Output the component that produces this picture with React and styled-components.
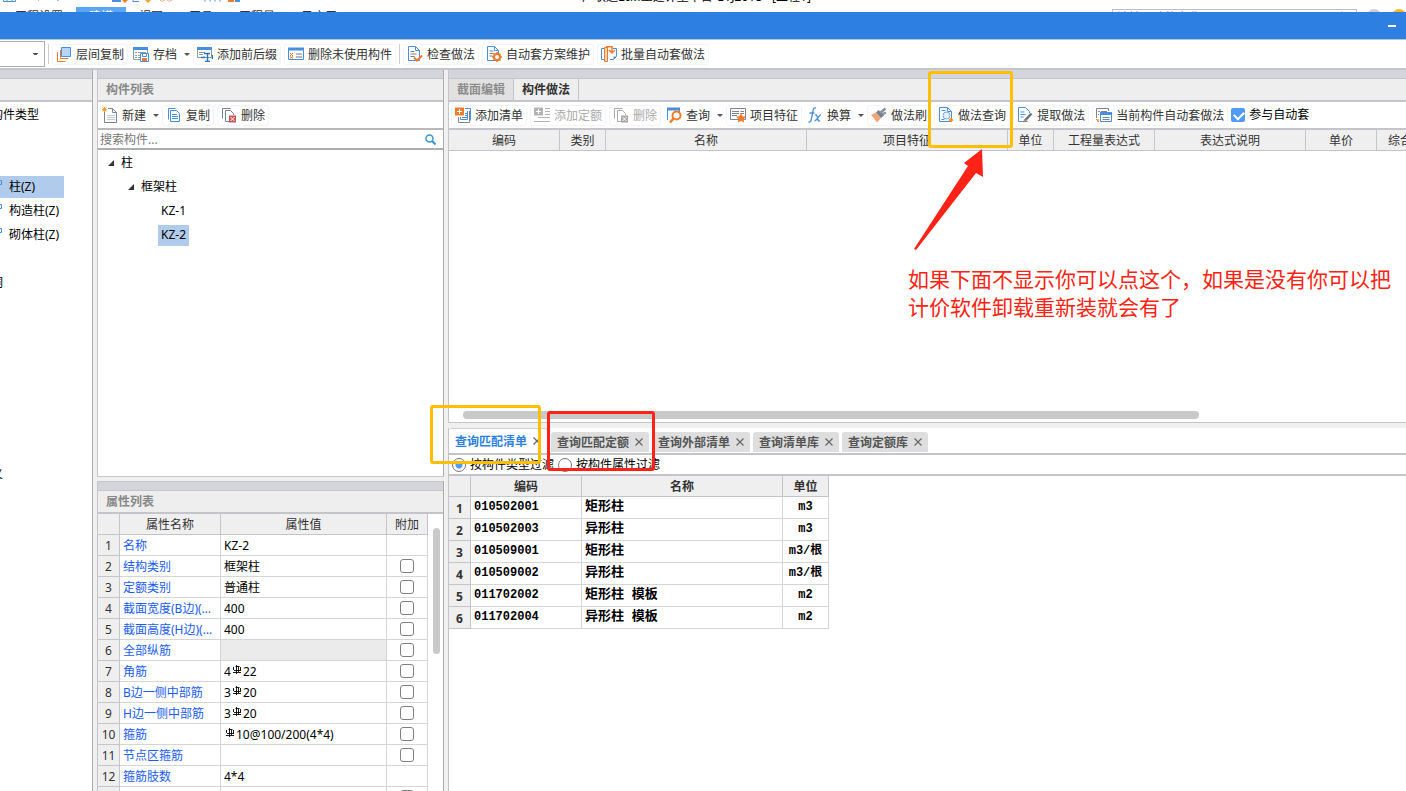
import { useState } from "react";
import styled, { createGlobalStyle, css } from "styled-components";

const line = "#c3c5ca";
const edge = "#adadad";
const accent = "#4a8fdc";
const orange = "#ee7b2b";

const GlobalStyle = createGlobalStyle`
  * {
    box-sizing: border-box;
  }
  body {
    margin: 0;
    overflow: hidden;
    background: #f0f0f0;
    color: #333;
  }
  body, button, input, select, table {
    font-family: "Noto Sans", "Noto Sans CJK SC", sans-serif;
    font-size: 12px;
    line-height: 16px;
  }
  button {
    margin: 0;
    padding: 0;
    border: 0;
    background: none;
    color: inherit;
    white-space: nowrap;
  }
  svg {
    display: block;
    flex-shrink: 0;
  }
`;

const Window = styled.div`
  position: relative;
  display: flex;
  flex-direction: column;
  height: 100vh;
  overflow: hidden;
`;

/* main window, mostly hidden behind the dialog */
const BackWindow = styled.div`
  height: 12px;
  background: #fff;
  overflow: hidden;
`;

const BackTitle = styled.div`
  display: flex;
  align-items: flex-end;
  height: 7px;
  padding-left: 2px;
  overflow: hidden;
  color: #000;
  span {
    margin: 0 0 4px 342px;
    line-height: 12px;
    white-space: nowrap;
  }
`;

const BackTabs = styled.div`
  display: flex;
  align-items: flex-start;
  height: 20px;
  padding-left: 2px;
`;

const BackTab = styled.button`
  padding: 0 13px;
  line-height: 20px;
  color: ${(p) => (p.$active ? "#fff" : "#333")};
  background: ${(p) => (p.$active ? "#5aa7f8" : "none")};
`;

const BackSearch = styled.div`
  width: 245px;
  height: 20px;
  margin: 2px 10px 0 auto;
  padding: 0 10px 0 4px;
  display: flex;
  justify-content: space-between;
  border: 1px solid #c0c0c0;
  color: #999;
  line-height: 16px;
`;

const Avatars = styled.div`
  display: flex;
  gap: 11px;
  padding-top: 2px;
`;

const Avatar = styled.i`
  width: 14px;
  height: 14px;
  border-radius: 50%;
  border: 3px solid ${(p) => p.$color};
`;

const TitleBar = styled.header`
  display: flex;
  justify-content: flex-end;
  align-items: center;
  height: 28px;
  padding-right: 10px;
  background: #2d7fe1;
  border-bottom: 1px solid #b9c4d3;
`;

const Minimize = styled.button`
  width: 8px;
  height: 2px;
  background: #fff;
`;

const Toolbar = styled.div`
  display: flex;
  align-items: center;
  gap: 3px;
  height: 26px;
  padding: 0 2px;
  background: #fff;
  overflow: hidden;
`;

const MainToolbar = styled(Toolbar)`
  height: 30px;
  padding: 0;
  border-bottom: 2px solid ${line};
`;

const FloorSelect = styled.select`
  width: 45px;
  height: 26px;
  border: 1px solid ${edge};
  border-left: 0;
  background: #fff;
  appearance: none;
  background-image: linear-gradient(45deg, transparent 50%, #555 50%),
    linear-gradient(-45deg, transparent 50%, #555 50%);
  background-position: 33px 11px, 36px 11px;
  background-size: 3px 3px;
  background-repeat: no-repeat;
`;

const Divider = styled.span`
  width: 1px;
  height: 20px;
  background: #cfcfcf;
`;

const ToolButton = styled.button`
  display: flex;
  align-items: center;
  gap: 4px;
  height: 21px;
  padding: 0 3px;
  border: 1px solid #f4f4f4;
  border-radius: 3px;
  &:disabled {
    color: #aaa;
  }
  span {
    padding-top: 2px;
  }
  ${(p) =>
    p.$menu &&
    css`
      padding: 0 0 0 1px;
      border-color: transparent;
      border-right: 0;
    `}
`;

const Caret = styled.i`
  width: 6px;
  margin-left: 3px;
  border: 3px solid transparent;
  border-top-color: #555;
  border-bottom: 0;
`;

const Workspace = styled.main`
  flex: 1;
  min-height: 0;
  display: grid;
  grid-template-columns: 93px 347px minmax(0, 1fr);
  grid-template-rows: minmax(0, 1fr);
  gap: 4px;
`;

const Stack = styled.div`
  display: grid;
  grid-template-columns: minmax(0, 1fr);
  grid-template-rows: ${(p) => p.$rows};
  gap: ${(p) => p.$gap};
`;

const Panel = styled.section`
  display: flex;
  flex-direction: column;
  min-height: 0;
  overflow: hidden;
  background: #fff;
  border: 1px solid ${line};
  border-width: ${(p) => p.$borders};
  border-right-color: ${edge};
`;

const PanelGrip = styled.div`
  flex-shrink: 0;
  height: 9px;
  background: #d3d5db;
  border-bottom: 1px solid ${line};
`;

const PanelTitle = styled.h2`
  flex-shrink: 0;
  height: 23px;
  margin: 0;
  padding-left: 8px;
  background: #eee;
  border-bottom: 2px solid ${line};
  color: #888;
  font-size: 12px;
  font-weight: 700;
  line-height: 21px;
`;

const TypeList = styled.ul`
  margin: 0 0 0 -33px;
  padding: 2px 0 0;
  list-style: none;
  color: #000;
`;

const TypeItem = styled.li`
  display: flex;
  align-items: center;
  gap: 6px;
  width: 97px;
  height: 22px;
  margin-bottom: 2px;
  padding-left: ${(p) => (p.$child ? "20px" : "0")};
  background: ${(p) => (p.$selected ? "#b1cbed" : "none")};
  white-space: nowrap;
`;

const SearchRow = styled.label`
  display: flex;
  align-items: center;
  flex-shrink: 0;
  height: 22px;
  padding: 0 7px 0 2px;
  border-top: 2px solid #b8b8bb;
  border-bottom: 2px solid ${edge};
  input {
    flex: 1;
    min-width: 0;
    padding: 2px 0 0;
    border: 0;
    outline: 0;
    background: none;
  }
  input::placeholder {
    color: #777;
  }
`;

const Tree = styled.ul`
  margin: 0;
  padding: 1px 0 0 10px;
  list-style: none;
  color: #000;
`;

const TreeItem = styled.li`
  display: flex;
  align-items: center;
  gap: 4px;
  height: 24px;
  padding-left: ${(p) => p.$level * 20}px;
`;

const TreeLabel = styled.button`
  height: 21px;
  padding: 0 3px;
  background: ${(p) => (p.$selected ? "#b1cbed" : "none")};
`;

const TableArea = styled.div`
  display: flex;
  flex: 1;
  min-height: 0;
  overflow: hidden;
`;

const MethodArea = styled(TableArea)`
  border-top: 2px solid ${line};
`;

const Grid = styled.table`
  flex-shrink: 0;
  align-self: flex-start;
  width: ${(p) => p.$width};
  border-collapse: separate;
  border-spacing: 0;
  table-layout: fixed;
  color: #000;
  th, td {
    height: ${(p) => p.$row};
    padding: 2px 3px 0;
    border-right: 1px solid #d5d5d5;
    border-bottom: 1px solid #d5d5d5;
    text-align: left;
    font-weight: 400;
    white-space: nowrap;
    overflow: hidden;
    text-overflow: ellipsis;
  }
  thead th {
    height: 21px;
  }
  th {
    padding: 2px 0 0;
    background: #efefef;
    border-color: ${line};
    color: #333;
    text-align: center;
  }
`;

const MatchGrid = styled(Grid)`
  th, tbody th {
    font-weight: 700;
  }
  tbody th {
    padding-top: 3px;
  }
  td {
    padding-top: 0;
    padding-bottom: 2px;
    font-family: "Liberation Mono", "Noto Sans CJK SC", monospace;
    font-weight: 700;
  }
  td:nth-child(3) {
    font-size: 13px;
  }
  td:last-child {
    padding-left: 0;
    padding-right: 0;
    text-align: center;
  }
`;

const NameCell = styled.td`
  && {
    color: #1a5cf0;
  }
`;

const ValueCell = styled.td`
  background: ${(p) => (p.$locked ? "#ebebeb" : "none")};
  svg {
    display: inline-block;
    margin: 0 1px;
    vertical-align: 1px;
  }
`;

const CheckCell = styled.td`
  && {
    padding-top: 0;
  }
`;

const Check = styled.input.attrs({ type: "checkbox" })`
  appearance: none;
  display: block;
  width: 14px;
  height: 14px;
  margin: 0 auto;
  border: 1px solid #808080;
  border-radius: 3px;
  background: #fff;
  ${(p) =>
    p.$blue &&
    css`
      margin: 0 4px 0 0;
      border: 0;
      border-radius: 2px;
      background: #4f9bf6;
      &:checked::after {
        content: "";
        display: block;
        width: 8px;
        height: 5px;
        margin: 3px;
        border: solid #fff;
        border-width: 0 0 2px 2px;
        transform: rotate(-45deg);
      }
    `}
`;

const CheckLabel = styled.label`
  display: flex;
  align-items: center;
  color: #000;
  white-space: nowrap;
`;

const VScroll = styled.div`
  flex: 1;
  padding: 14px 3px 0 5px;
  i {
    display: block;
    height: 126px;
    border-radius: 4px;
    background: #c9c9c9;
  }
`;

const HScroll = styled.div`
  padding: 0 0 3px 14px;
  i {
    display: block;
    width: 78%;
    height: 8px;
    border-radius: 4px;
    background: #c9c9c9;
  }
`;

const ViewTabs = styled.div`
  display: flex;
  flex-shrink: 0;
  height: 23px;
  background: #eee;
  border-bottom: 2px solid ${line};
`;

const ViewTab = styled.button`
  width: 65px;
  border-right: 1px solid ${line};
  background: ${(p) => (p.$active ? "#eee" : "#e1e1e1")};
  color: ${(p) => (p.$active ? "#333" : "#8c8c8c")};
  font-weight: 700;
`;

const QueryTabs = styled.div`
  display: flex;
  align-items: flex-end;
  gap: 3px;
  height: 27px;
  background: #fff;
  border-bottom: 2px solid ${line};
`;

const QueryTab = styled.div`
  display: flex;
  align-items: center;
  gap: 6px;
  height: 20px;
  margin-bottom: 1px;
  padding: 0 6px;
  border-radius: 3px 3px 0 0;
  background: #dedede;
  color: #555;
  font-weight: 700;
  ${(p) =>
    p.$active &&
    css`
      height: 25px;
      margin-bottom: 0;
      border: 1px solid #d0d0d0;
      border-width: 1px 1px 0 0;
      background: #fff;
      color: #2d7fe1;
    `}
  button {
    font-weight: inherit;
  }
  button:first-child {
    padding-top: 2px;
  }
`;

const FilterRow = styled.div`
  display: flex;
  align-items: center;
  flex-shrink: 0;
  gap: 4px;
  height: 21px;
  padding-left: 3px;
  border-bottom: 2px solid ${line};
  label {
    display: flex;
    align-items: center;
    gap: 4px;
    color: #000;
  }
  input {
    appearance: none;
    width: 14px;
    height: 14px;
    margin: 0;
    border: 1px solid #777;
    border-radius: 50%;
    background: #fff;
  }
  input:checked {
    background: radial-gradient(circle, #4f9bf6 3px, #fff 4px);
  }
`;

const Fill = styled.div`
  flex: 1;
  min-height: 0;
`;

/* notes drawn over the window */
const Marker = styled.div`
  position: absolute;
  left: ${(p) => p.$x}px;
  top: ${(p) => p.$y}px;
  width: ${(p) => p.$w}px;
  height: ${(p) => p.$h}px;
  border: 3px solid ${(p) => p.$color};
  border-radius: 3px;
  pointer-events: none;
`;

const Arrow = styled.svg`
  position: absolute;
  left: 912px;
  top: 146px;
  pointer-events: none;
`;

const Note = styled.p`
  position: absolute;
  left: 908px;
  top: 264px;
  width: 490px;
  margin: 0;
  color: #fb2414;
  font-family: "Noto Sans CJK SC", sans-serif;
  font-size: 21px;
  line-height: 28px;
`;

const drawings = {
  layers: (
    <>
      <path d="M1.500 6v9.500h8M4.500 4v8.500h8" stroke={orange} />
      <path d="M5.500 1.500h9v9h-9z" fill="#b5d5fb" stroke={accent} />
    </>
  ),
  archive: (
    <>
      <path d="M.5 1.500h14v12H.5z" stroke="#8b98a5" fill="#fff" />
      <path d="M0 1h15v3H0z" fill={accent} />
      <path d="M2 6.500h2m1 0h8M2 9.500h2m1 0h2M2 11.500h2m1 0h2" stroke="#8b98a5" />
      <path d="M7.500 7.500h8v8h-8z" fill="#fff" stroke={accent} />
      <path d="M9.500 8v2.500h4V8" stroke={accent} />
      <path d="M9 12h5v3H9z" fill={orange} />
    </>
  ),
  affix: (
    <>
      <path d="M.5 1.500h14v10H.5z" stroke="#8b98a5" fill="#fff" />
      <path d="M0 1h15v3H0z" fill={accent} />
      <path d="M2 6.500h6M2 8.500h4" stroke="#8b98a5" />
      <path d="M7 7.500h6M10.500 7.500v8M4 11.500h3v-1M8 15.500h5M15.500 9v4" stroke="#2f74c4" strokeWidth="1.500" />
    </>
  ),
  unused: (
    <>
      <path d="M.5 2.500h15v11H.5z" stroke={accent} fill="#fff" />
      <path d="M0 1.500h16v3H0z" fill={accent} />
      <path d="M2 7l3 3M5 7l-3 3M2 10.500l3 2M5 10.500l-3 2" stroke={orange} />
      <path d="M8 8h6M8 11h6" stroke="#667788" />
    </>
  ),
  check: (
    <>
      <path d="M1.500.5h7l4 4v10h-11z" fill="#fff" stroke={accent} />
      <path d="M8.500.5v4h4" stroke={accent} />
      <path d="M3.500 5.500h4M3.500 8h6M3.500 10.500h4" stroke="#6f7f8f" />
      <path d="M7 11.500l3 3 5-5" stroke={orange} strokeWidth="2" />
    </>
  ),
  scheme: (
    <>
      <path d="M1.500.5h7l4 4v10h-11z" fill="#fff" stroke={accent} />
      <path d="M8.500.5v4h4" stroke={accent} />
      <path d="M3.500 5h4M3.500 7.500h4M3.500 10h3" stroke="#6f7f8f" />
      <circle cx="11" cy="11" r="3" fill="#fff" stroke={orange} strokeWidth="2" />
      <path d="M11 6v2M11 14v2M6 11h2M14 11h2M7.500 7.500l1.500 1.500M13 13l1.500 1.500M14.500 7.500L13 9M9 13l-1.500 1.500" stroke={orange} strokeWidth="1.500" />
    </>
  ),
  batch: (
    <>
      <path d="M3 2.500H.5v11H3M12 2.500h3.500v8l-3 3H9" stroke={accent} />
      <path d="M12.500 13.500v-3h3" fill={accent} />
      <path d="M3.500 1.500h3v14h-3z" fill="#fdd5b5" stroke={orange} />
      <path d="M5 .7h6v5M8 4l3 3 3-3" stroke={orange} strokeWidth="1.500" />
    </>
  ),
  create: (
    <>
      <path d="M2.500 5v10.500h12v-10l-4-4H6" fill="#fff" stroke="#7c858e" />
      <path d="M10.500 1.500v4h4" stroke="#7c858e" />
      <path d="M5 8.500h8M5 10.500h8M5 12.500h8" stroke="#c3c8cd" />
      <path d="M.5.5l4 4M4.500.5l-4 4M2.500 0v5M0 2.500h5" stroke="#f5a02c" />
    </>
  ),
  copy: (
    <>
      <path d="M2.500 12.500v-11h7" stroke={accent} />
      <path d="M4.500 3.500h6l3 3v8h-9z" fill="#fff" stroke={accent} />
      <path d="M6 7.500h5M6 9.500h6M6 11.500h6" stroke={accent} />
    </>
  ),
  remove: (
    <>
      <path d="M1.500 11.500v-10h8" stroke="#7c858e" />
      <path d="M8 14.500H4.500v-11h5l3 3V8" stroke="#7c858e" />
      <path d="M8 8.500h7v7H8z" fill="#c95454" />
      <path d="M9.500 10l4 4M13.500 10l-4 4" stroke="#fff" />
    </>
  ),
  removeOff: (
    <>
      <path d="M1.500 11.500v-10h8" stroke="#aaa" />
      <path d="M8 14.500H4.500v-11h5l3 3V8" stroke="#aaa" />
      <path d="M8 8.500h7v7H8z" fill="#a8a8a8" />
      <path d="M9.500 10l4 4M13.500 10l-4 4" stroke="#fff" />
    </>
  ),
  addList: (
    <>
      <path d="M10 1.500h5.500v12M12.500 4v8.500h-7V10" stroke={accent} />
      <path d="M3.500 10v5.500h11V4" stroke="#7c858e" />
      <path d="M10 6.500h2M10 8.500h2M7 10.500h5" stroke={accent} />
      <path d="M0 .5h9v8H0z" fill={orange} />
      <path d="M2 4.500h5M4.500 2v5" stroke="#fff" />
    </>
  ),
  addQuota: (
    <>
      <path d="M0 .5h9v8H0z" fill="#b3b3b3" />
      <path d="M2 4.500h5M4.500 2v5" stroke="#fff" />
      <path d="M11 1.500h5M11 4.500h5M11 7.500h5M4 10.500h12M0 14.500h16" stroke="#b3b3b3" />
    </>
  ),
  query: (
    <>
      <path d="M1.500 13V2h12v3" stroke={accent} />
      <path d="M1 .5h13v3H1z" fill={accent} />
      <circle cx="10.500" cy="8.500" r="4" fill="#fff" stroke={orange} strokeWidth="2" />
      <path d="M7.500 11.500L4 15.500" stroke={orange} strokeWidth="2.500" />
    </>
  ),
  feature: (
    <>
      <path d="M.5 1.500h15v11H.5z" fill="#fff" stroke="#7c858e" />
      <path d="M2 4.500h7M2 6.500h7M2 8.500h5M10.500 4.500H14M10.500 6.500H14" stroke="#7c858e" />
      <path d="M11 6l1.600 3.200 3.400.5-2.500 2.400.6 3.500-3.100-1.700-3.100 1.700.6-3.500L6 9.700l3.400-.5z" fill={orange} />
    </>
  ),
  fx: (
    <path d="M1.500 15c2 .5 2.500-1 3-3.500L6 4c.5-2.500 1-3.500 3-3M2.500 6h5M8 8c2-1 2 1 2.500 3s1 4 2.500 2.500M14 8c-2-.5-4 6-6.500 6" stroke={accent} strokeWidth="1.300" />
  ),
  brush: (
    <>
      <path d="M0 8l5-2.500 5 5.500-4 4.500q-3-5-6-7.500z" fill="#f4a374" />
      <path d="M5 5.500l2.500-2.500 5.500 5.500-3 2.500z" fill="#75818d" />
      <path d="M9 6l5.500-4.500M11 7.500l4-2" stroke="#8793a0" strokeWidth="2.500" />
    </>
  ),
  lookup: (
    <>
      <path d="M1.500.5h8l4 4v10h-12z" fill="#fff" stroke={accent} />
      <path d="M9.500.5v4h4M3.500 3.500h4M3.500 12.500h3" stroke={accent} />
      <circle cx="8.500" cy="8.500" r="3.500" fill="#e3effd" stroke="#7aa6dc" />
      <path d="M10.500 13l2.500-2.500 2.500 2.500-2.500 2.500z" fill="#f09322" />
    </>
  ),
  extract: (
    <>
      <path d="M12.500 6V4.500l-4-4h-7v14h9" fill="#fff" stroke={accent} />
      <path d="M3.500 5h4M3.500 7.500h5M3.500 10h3" stroke={accent} />
      <path d="M8 13.500l6.500-7" stroke="#66727e" strokeWidth="2.500" />
      <path d="M6 15.500l1-3 2 2z" fill={orange} />
    </>
  ),
  current: (
    <>
      <path d="M.5 11V1.500h12V4M2 4.500h2m1 0h6M2 7.500h1" stroke="#7c858e" />
      <path d="M4.500 5.500h11v9h-11z" fill="#fff" stroke={accent} />
      <path d="M4 5h12v3H4z" fill={accent} />
      <path d="M6.500 10.500h7M6.500 12.500h7" stroke="#7c858e" />
      <path d="M0 12l3 3M2 12v3" stroke={orange} />
    </>
  ),
  column: (
    <path d="M8 1.500h6.500v4H8M4 12h8" stroke={accent} />
  ),
};

function Icon({ name }) {
  return (
    <svg width="16" height="16" viewBox="0 0 16 16" fill="none" aria-hidden="true">
      {drawings[name]}
    </svg>
  );
}

function Tool({ icon, label, menu, disabled }) {
  return (
    <ToolButton $menu={menu} disabled={disabled}>
      <Icon name={icon} />
      <span>{label}</span>
      {menu && <Caret />}
    </ToolButton>
  );
}

function Expander() {
  return (
    <svg width="6" height="6" viewBox="0 0 6 6" aria-hidden="true">
      <path d="M6 0v6H0z" fill="#333" />
    </svg>
  );
}

function Rebar() {
  return (
    <svg width="10" height="10" viewBox="0 0 10 10" fill="none" stroke="#000" role="img" aria-label="HRB400">
      <path d="M3.500 1.500h4M1.500 2v3M8.500 2v3M2 5.500h7M1 7.500h8M4.500 0v9M6.500 2v5" strokeWidth="0.900" />
    </svg>
  );
}

function Close() {
  return (
    <svg width="8" height="8" viewBox="0 0 8 8" stroke="#666" strokeWidth="1.200" aria-hidden="true">
      <path d="M.5.5l7 7M7.500.5l-7 7" />
    </svg>
  );
}

const types = [
  "常用构件类型", "轴线", "柱", "柱(Z)", "构造柱(Z)", "砌体柱(Z)", "墙", "门窗洞",
  "梁", "板", "楼梯", "装修", "土方", "基础", "其它", "自定义",
];

const properties = [
  { name: "名称", value: "KZ-2", noCheck: true },
  { name: "结构类别", value: "框架柱" },
  { name: "定额类别", value: "普通柱" },
  { name: "截面宽度(B边)(mm)", value: "400" },
  { name: "截面高度(H边)(mm)", value: "400" },
  { name: "全部纵筋", value: "", locked: true },
  { name: "角筋", value: <>4<Rebar />22</> },
  { name: "B边一侧中部筋", value: <>3<Rebar />20</> },
  { name: "H边一侧中部筋", value: <>3<Rebar />20</> },
  { name: "箍筋", value: <><Rebar />10@100/200(4*4)</> },
  { name: "节点区箍筋", value: "" },
  { name: "箍筋肢数", value: "4*4", noCheck: true },
  { name: "", value: "" },
];

const methodColumns = [
  ["编码", 111], ["类别", 46], ["名称", 201], ["项目特征", 201], ["单位", 46],
  ["工程量表达式", 101], ["表达式说明", 151], ["单价", 71], ["综合单价", 71],
];

const matches = [
  ["010502001", "矩形柱", "m3"],
  ["010502003", "异形柱", "m3"],
  ["010509001", "矩形柱", "m3/根"],
  ["010509002", "异形柱", "m3/根"],
  ["011702002", "矩形柱 模板", "m2"],
  ["011702004", "异形柱 模板", "m2"],
];

const queries = ["查询匹配清单", "查询匹配定额", "查询外部清单", "查询清单库", "查询定额库"];

export default function App() {
  const [query, setQuery] = useState(queries[0]);
  const [component, setComponent] = useState("KZ-2");

  return (
    <Window>
      <GlobalStyle />
      <BackWindow>
        <BackTitle>
          <svg width="238" height="7" viewBox="0 0 238 7" fill="none">
            <path d="M1.500 0v1.500h12V0M5 0v2M10 0v2M131 0v1.500h6" stroke={accent} />
            <path d="M36 0h1M55 0h2" stroke="#777" />
            <path d="M110 0h9v2h-9zM233 0h6v2h-6z" fill={accent} />
            <path d="M120 0h6l-3 3zM226 0h6v2h-6z" fill={orange} />
            <path d="M143 0h6l-3 3z" fill="#f0a22c" />
            <path d="M158 0q2 3 5 0M165 0q2 3 5 0" stroke="#f3a779" />
            <path d="M203 0v1.500M208 0v1.500M213 0v1.500M218 0v1.500" stroke={accent} />
          </svg>
          <span>广联达BIM土建计量平台 GTJ2018 - [工程1]</span>
        </BackTitle>
        <BackTabs>
          {["工程设置", "建模", "视图", "工具", "工程量", "云应用"].map((t) => (
            <BackTab key={t} $active={t === "建模"}>{t}</BackTab>
          ))}
          <BackSearch>
            <span>请输入功能名称</span>
            <svg width="8" height="8" viewBox="0 0 8 8" fill="none" stroke="#999">
              <circle cx="4" cy="5" r="3" />
            </svg>
          </BackSearch>
          <Avatars>
            <Avatar $color="#d0d0d0" />
            <Avatar $color="#f3b91e" />
          </Avatars>
        </BackTabs>
      </BackWindow>
      <TitleBar>
        <Minimize aria-label="最小化" />
      </TitleBar>

      <MainToolbar>
        <FloorSelect aria-label="楼层">
          <option></option>
        </FloorSelect>
        <Divider />
        <Tool icon="layers" label="层间复制" />
        <Tool icon="archive" label="存档" menu />
        <Tool icon="affix" label="添加前后缀" />
        <Tool icon="unused" label="删除未使用构件" />
        <Divider />
        <Tool icon="check" label="检查做法" />
        <Tool icon="scheme" label="自动套方案维护" />
        <Tool icon="batch" label="批量自动套做法" />
      </MainToolbar>

      <Workspace>
        <Panel $borders="0 1px 0 0">
          <PanelGrip />
          <PanelTitle />
          <TypeList>
            {types.map((t) => (
              <TypeItem key={t} $child={t.includes("(Z)")} $selected={t === "柱(Z)"}>
                {t.includes("(Z)") && <Icon name="column" />}
                {t}
              </TypeItem>
            ))}
          </TypeList>
        </Panel>

        <Stack $rows="minmax(0, 407fr) minmax(0, 310fr)" $gap="4px">
          <Panel $borders="0 1px 1px">
            <PanelGrip />
            <PanelTitle>构件列表</PanelTitle>
            <Toolbar>
              <Tool icon="create" label="新建" menu />
              <Tool icon="copy" label="复制" />
              <Tool icon="remove" label="删除" />
            </Toolbar>
            <SearchRow>
              <input aria-label="搜索构件" placeholder="搜索构件..." />
              <svg width="11" height="11" viewBox="0 0 11 11" fill="none" stroke="#3c94cf">
                <circle cx="4.500" cy="4.500" r="3.500" strokeWidth="1.500" />
                <path d="M7 7l3.500 3.500" strokeWidth="2" />
              </svg>
            </SearchRow>
            <Tree>
              <TreeItem $level={0}><Expander /><TreeLabel>柱</TreeLabel></TreeItem>
              <TreeItem $level={1}><Expander /><TreeLabel>框架柱</TreeLabel></TreeItem>
              {["KZ-1", "KZ-2"].map((k) => (
                <TreeItem key={k} $level={2.5}>
                  <TreeLabel $selected={component === k} onClick={() => setComponent(k)}>{k}</TreeLabel>
                </TreeItem>
              ))}
            </Tree>
          </Panel>

          <Panel $borders="1px 1px 0">
            <PanelGrip />
            <PanelTitle>属性列表</PanelTitle>
            <TableArea>
              <Grid $width="330px" $row="21px">
                <colgroup>
                  <col width="22" />
                  <col width="101" />
                  <col width="166" />
                  <col width="41" />
                </colgroup>
                <thead>
                  <tr>
                    <th></th>
                    <th>属性名称</th>
                    <th>属性值</th>
                    <th>附加</th>
                  </tr>
                </thead>
                <tbody>
                  {properties.map((p, i) => (
                    <tr key={i}>
                      <th>{p.name && i + 1}</th>
                      <NameCell>{p.name}</NameCell>
                      <ValueCell $locked={p.locked}>{p.value}</ValueCell>
                      <CheckCell>{!p.noCheck && <Check aria-label={p.name || "附加"} />}</CheckCell>
                    </tr>
                  ))}
                </tbody>
              </Grid>
              <VScroll><i /></VScroll>
            </TableArea>
          </Panel>
        </Stack>

        <Stack $rows="minmax(0, 353fr) minmax(0, 363fr)" $gap="5px">
          <Panel $borders="0 0 1px 1px">
            <PanelGrip />
            <ViewTabs>
              <ViewTab>截面编辑</ViewTab>
              <ViewTab $active>构件做法</ViewTab>
            </ViewTabs>
            <Toolbar>
              <Tool icon="addList" label="添加清单" />
              <Tool icon="addQuota" label="添加定额" disabled />
              <Tool icon="removeOff" label="删除" disabled />
              <Tool icon="query" label="查询" menu />
              <Tool icon="feature" label="项目特征" />
              <Tool icon="fx" label="换算" menu />
              <Tool icon="brush" label="做法刷" />
              <Tool icon="lookup" label="做法查询" />
              <Tool icon="extract" label="提取做法" />
              <Tool icon="current" label="当前构件自动套做法" />
              <CheckLabel>
                <Check $blue defaultChecked />
                参与自动套
              </CheckLabel>
            </Toolbar>
            <MethodArea>
              <Grid $width="999px" $row="21px">
                <colgroup>
                  {methodColumns.map(([name, width]) => <col key={name} width={width} />)}
                </colgroup>
                <thead>
                  <tr>
                    {methodColumns.map(([name]) => <th key={name}>{name}</th>)}
                  </tr>
                </thead>
              </Grid>
            </MethodArea>
            <HScroll><i /></HScroll>
          </Panel>

          <Panel $borders="0 0 0 1px">
            <QueryTabs>
              {queries.map((q) => (
                <QueryTab key={q} $active={q === query}>
                  <button onClick={() => setQuery(q)}>{q}</button>
                  <button aria-label={"关闭" + q}><Close /></button>
                </QueryTab>
              ))}
            </QueryTabs>
            <FilterRow>
              <label><input type="radio" name="filter" defaultChecked />按构件类型过滤</label>
              <label><input type="radio" name="filter" />按构件属性过滤</label>
            </FilterRow>
            <Fill>
              <MatchGrid $width="380px" $row="22px">
                <colgroup>
                  <col width="22" />
                  <col width="111" />
                  <col width="201" />
                  <col width="46" />
                </colgroup>
                <thead>
                  <tr>
                    <th></th>
                    <th>编码</th>
                    <th>名称</th>
                    <th>单位</th>
                  </tr>
                </thead>
                <tbody>
                  {matches.map(([code, name, unit], i) => (
                    <tr key={code}>
                      <th>{i + 1}</th>
                      <td>{code}</td>
                      <td>{name}</td>
                      <td>{unit}</td>
                    </tr>
                  ))}
                </tbody>
              </MatchGrid>
            </Fill>
          </Panel>
        </Stack>
      </Workspace>

      <Marker $x={928} $y={71} $w={85} $h={77} $color="#ffbf00" />
      <Marker $x={430} $y={405} $w={111} $h={59} $color="#ffbf00" />
      <Marker $x={547} $y={411} $w={108} $h={60} $color="#ff2216" />
      <Arrow width="76" height="106" viewBox="0 0 76 106">
        <path d="M70 3L52 17l4 3L2 103l2 1L64 27l7 4z" fill="#ff2216" />
      </Arrow>
      <Note>如果下面不显示你可以点这个，如果是没有你可以把计价软件卸载重新装就会有了</Note>
    </Window>
  );
}
